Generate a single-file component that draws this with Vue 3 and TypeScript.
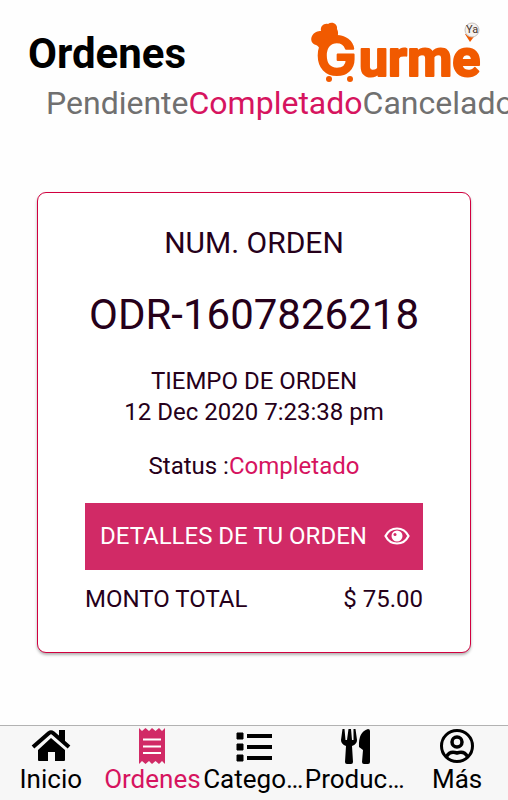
<script setup lang="ts">
import { ref } from 'vue'

type Tab = 'Pendiente' | 'Completado' | 'Cancelado'
interface NavItem {
  id: string
  label: string
}

const tabs: Tab[] = ['Pendiente', 'Completado', 'Cancelado']
const activeTab = ref<Tab>('Completado')

const navItems: NavItem[] = [
  { id: 'home', label: 'Inicio' },
  { id: 'orders', label: 'Ordenes' },
  { id: 'categories', label: 'Categorias' },
  { id: 'products', label: 'Productos' },
  { id: 'more', label: 'Más' },
]
const activeNav = ref('orders')

const order = {
  number: 'ODR-1607826218',
  time: '12 Dec 2020 7:23:38 pm',
  status: 'Completado',
  total: '$ 75.00',
}
</script>

<template>
  <div class="page">
    <header class="header">
      <h1 class="title">Ordenes</h1>
      <svg class="logo" width="172" height="64" viewBox="0 0 172 64" role="img" aria-label="Gurmé Ya">
        <g fill="#f15a00">
          <path d="M11 29C8 28 9 26 6 25C2 24 0 20 2 16C4 12 8 11 11 11C10 6 14 3 18 4C22 1 28 4 27 9C29 13 28 16 26 20L15 28Z" />
          <circle cx="19" cy="59" r="3" />
          <circle cx="40" cy="59" r="3" />
          <text class="logo-text logo-initial" x="6" y="55">G</text>
          <text class="logo-text" x="49" y="56">urme</text>
          <path d="M155 14L160 22L166 14Z" />
        </g>
        <circle cx="162" cy="10" r="7" fill="#f4f1ef" stroke="#c9c2bd" stroke-width="1" />
        <text class="logo-badge" x="156" y="13">Ya</text>
      </svg>
    </header>

    <div class="tabs" role="tablist">
      <button
        v-for="tab in tabs"
        :key="tab"
        type="button"
        role="tab"
        class="tab"
        :class="{ active: tab === activeTab }"
        :aria-selected="tab === activeTab"
        @click="activeTab = tab"
      >{{ tab }}</button>
    </div>

    <main class="content">
      <article class="card">
        <h2 class="caption">NUM. ORDEN</h2>
        <p class="number">{{ order.number }}</p>
        <p class="line">TIEMPO DE ORDEN</p>
        <p class="line">{{ order.time }}</p>
        <p class="line status">Status :<span class="accent">{{ order.status }}</span></p>
        <button type="button" class="details">
          <span>DETALLES DE TU ORDEN</span>
          <svg width="26" height="20" viewBox="0 0 26 20" aria-hidden="true">
            <path d="M1.5 9C4 4 8 1.500 13 1.500S22 4 24.500 9C22 14 18 16.500 13 16.500S4 14 1.500 9Z" fill="none" stroke="#fff" stroke-width="2.200" />
            <circle cx="13" cy="9" r="5.500" fill="#fff" />
            <circle cx="11" cy="7.500" r="1.500" fill="#d12a66" />
          </svg>
        </button>
        <div class="total">
          <span>MONTO TOTAL</span>
          <span>{{ order.total }}</span>
        </div>
      </article>
    </main>

    <nav class="nav">
      <a
        v-for="item in navItems"
        :key="item.id"
        href="#"
        class="nav-item"
        :class="{ active: item.id === activeNav }"
        @click.prevent="activeNav = item.id"
      >
        <svg v-if="item.id === 'home'" class="icon" viewBox="0 0 40 36" aria-hidden="true">
          <path d="M20 10L34 22V32Q34 33 33 33H24V24H17V33H8Q7 33 7 32V22Z" fill="currentColor" />
          <path d="M2 19L18 5Q20 3.500 22 5L38 19" fill="none" stroke="currentColor" stroke-width="4" stroke-linejoin="round" />
          <path d="M28 2H34V17L28 11Z" fill="currentColor" />
        </svg>
        <svg v-else-if="item.id === 'orders'" class="icon" viewBox="0 0 40 36" aria-hidden="true">
          <path d="M7 0L10 3L13.500 0L17 3L20 0L23.500 3L27 0L30 3L33 0V36L30 33L27 36L23.500 33L20 36L17 33L13.500 36L10 33L7 36Z" fill="#d12a66" />
          <path d="M11 11.500H29M11 18.500H29M11 25H29" stroke="#fff" stroke-width="2" />
        </svg>
        <svg v-else-if="item.id === 'categories'" class="icon" viewBox="0 0 40 36" aria-hidden="true">
          <path d="M3 5H9V11H3ZM3 16H9V22H3ZM3 27H9V33H3Z" fill="currentColor" stroke="currentColor" stroke-linejoin="round" />
          <path d="M15 8H36M15 19H36M15 30H36" stroke="currentColor" stroke-width="4" stroke-linecap="square" />
        </svg>
        <svg v-else-if="item.id === 'products'" class="icon" viewBox="0 0 40 36" aria-hidden="true">
          <path d="M6.500 1L5 12Q5 16 10 18L9 34Q9 36 11 36H15Q17 36 17 34L16 18Q21 16 21 12L19.500 1H17.500V12H16L15 1H12.500L11 12H9.500L8.500 1Z" fill="currentColor" />
          <path d="M32 1Q34 1 34 3V34Q34 36 32 36H28Q26 36 26 34L27 22L23 19Q22 4 32 1Z" fill="currentColor" />
        </svg>
        <svg v-else class="icon" viewBox="0 0 40 36" aria-hidden="true">
          <circle cx="20" cy="18" r="15.500" fill="none" stroke="currentColor" stroke-width="3" />
          <circle cx="20" cy="14" r="5" fill="none" stroke="currentColor" stroke-width="3.500" />
          <path d="M9.500 28.500C12 24 16 23.500 20 25C24 23.500 28 24 30.500 28.500" fill="none" stroke="currentColor" stroke-width="3.500" />
        </svg>
        <span class="nav-label">{{ item.label }}</span>
      </a>
    </nav>
  </div>
</template>

<style>
body {
  background: #fefefe;
}
</style>

<style scoped>
.page {
  display: flex;
  flex-direction: column;
  min-height: 100vh;
  overflow: hidden;
  font-family: Roboto, sans-serif;
  color: #26001a;
}

button {
  font: inherit;
  border: 0;
  cursor: pointer;
}

.header {
  display: flex;
  justify-content: space-between;
  align-items: flex-start;
  padding: 20px 26px 0 28px;
}

.title {
  margin: 10px 0 0;
  font-size: 42px;
  line-height: 48px;
  font-weight: 700;
  color: #000;
}

.logo {
  overflow: visible;
}

.logo-text {
  font-family: Roboto, sans-serif;
  font-size: 52px;
  font-weight: 700;
  stroke: #f15a00;
  stroke-width: 2px;
  stroke-linejoin: round;
}

.logo-initial {
  font-family: Inter, sans-serif;
  font-size: 54px;
  font-weight: 600;
}

.logo-badge {
  font-family: Roboto, sans-serif;
  font-size: 11px;
  fill: #49332a;
}

.tabs {
  display: flex;
  padding-left: 46px;
}

.tab {
  flex: none;
  padding: 0;
  background: none;
  font-size: 32px;
  line-height: 38px;
  color: #707070;
}

.tab.active,
.accent {
  color: #d6145f;
}

.content {
  flex: 1;
  padding: 70px 37px 40px;
}

.card {
  padding: 30px 47px 37px;
  border: 1px solid #d1003f;
  border-radius: 9px;
  box-shadow: 0 2px 3px rgba(0, 0, 0, 0.3);
  background: #fff;
  text-align: center;
}

.caption {
  margin: 0;
  font-size: 30px;
  line-height: 40px;
  font-weight: 400;
}

.number {
  margin: 24px 0 23px;
  font-size: 42px;
  line-height: 56px;
}

.line {
  margin: 0;
  font-size: 24px;
  line-height: 31px;
}

.status {
  margin: 23px 0 21px;
}

.details {
  display: flex;
  justify-content: space-between;
  align-items: center;
  width: 100%;
  padding: 18px 13px 18px 15px;
  background: #d12a66;
  color: #fff;
  font-size: 24px;
  line-height: 31px;
}

.total {
  display: flex;
  justify-content: space-between;
  margin-top: 14px;
  font-size: 24px;
  line-height: 31px;
}

.nav {
  display: flex;
  border-top: 1px solid #b2b2b2;
  background: #f7f7f7;
}

.nav-item {
  flex: 1 1 0;
  min-width: 0;
  display: flex;
  flex-direction: column;
  align-items: center;
  padding: 2px 0 6px;
  color: #000;
  text-decoration: none;
}

.nav-item.active {
  color: #d6145f;
}

.icon {
  width: 40px;
  height: 36px;
}

.nav-label {
  max-width: 100%;
  overflow: hidden;
  text-overflow: ellipsis;
  white-space: nowrap;
  font-size: 26px;
  line-height: 30px;
}
</style>
